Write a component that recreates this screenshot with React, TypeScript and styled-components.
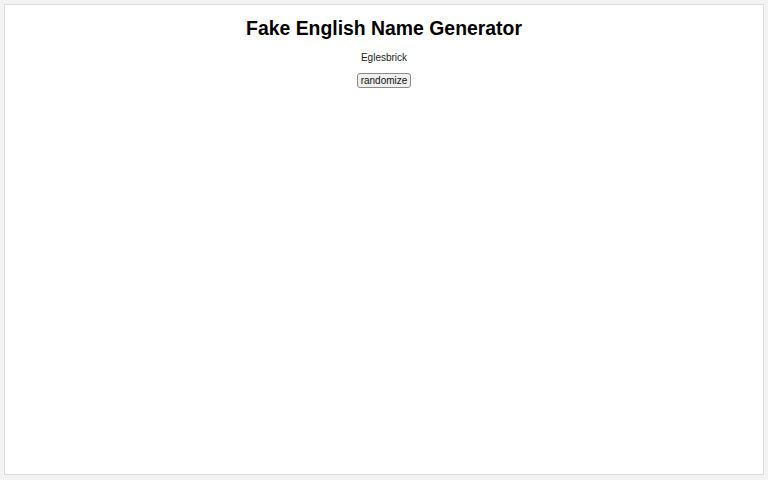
import * as React from 'react';
import styled, { createGlobalStyle } from 'styled-components';
import { useState } from 'react';

const GlobalStyle = createGlobalStyle`
    html, body {
        margin: 0;
        padding: 0;
        background: #f3f3f3;
    }

    body {
        padding: 4px;
        height: 480px;
        box-sizing: border-box;
        font-family: 'Liberation Sans', Arial, sans-serif;
    }

    #root {
        height: 100%;
    }
`;

const Card = styled.main`
    box-sizing: border-box;
    height: 471px;
    width: 760px;
    background: #ffffff;
    border: 1px solid #dcdcdc;
    display: flex;
    flex-direction: column;
    align-items: center;
`;

const Title = styled.h1`
    margin: 12px 0 0;
    font-size: 19.4px;
    font-weight: bold;
    line-height: 22px;
    color: #000;
`;

const Name = styled.p`
    margin: 13px 0 0;
    font-size: 10px;
    line-height: 12px;
    color: #222;
`;

const RandomButton = styled.button`
    margin-top: 9px;
    padding: 1px 3px;
    font-family: 'Liberation Sans', Arial, sans-serif;
    font-size: 10px;
    line-height: 11px;
    color: #111;
    background: #f0f0f0;
    border: 1px solid #8a8a8a;
    border-radius: 3px;
`;

const syllablesA = ['Egles', 'Thorn', 'Ash', 'Brad', 'Whit', 'Dun', 'Hol'];
const syllablesB = ['brick', 'ford', 'wick', 'ley', 'ton', 'bury', 'ham'];

export default function App(): JSX.Element {
    const [name, setName] = useState('Eglesbrick');

    const randomize = () => {
        const a = syllablesA[Math.floor(Math.random() * syllablesA.length)];
        const b = syllablesB[Math.floor(Math.random() * syllablesB.length)];
        setName(a + b);
    };

    return (
        <>
            <GlobalStyle />
            <Card>
                <Title>Fake English Name Generator</Title>
                <Name>{name}</Name>
                <RandomButton onClick={randomize}>randomize</RandomButton>
            </Card>
        </>
    );
}
